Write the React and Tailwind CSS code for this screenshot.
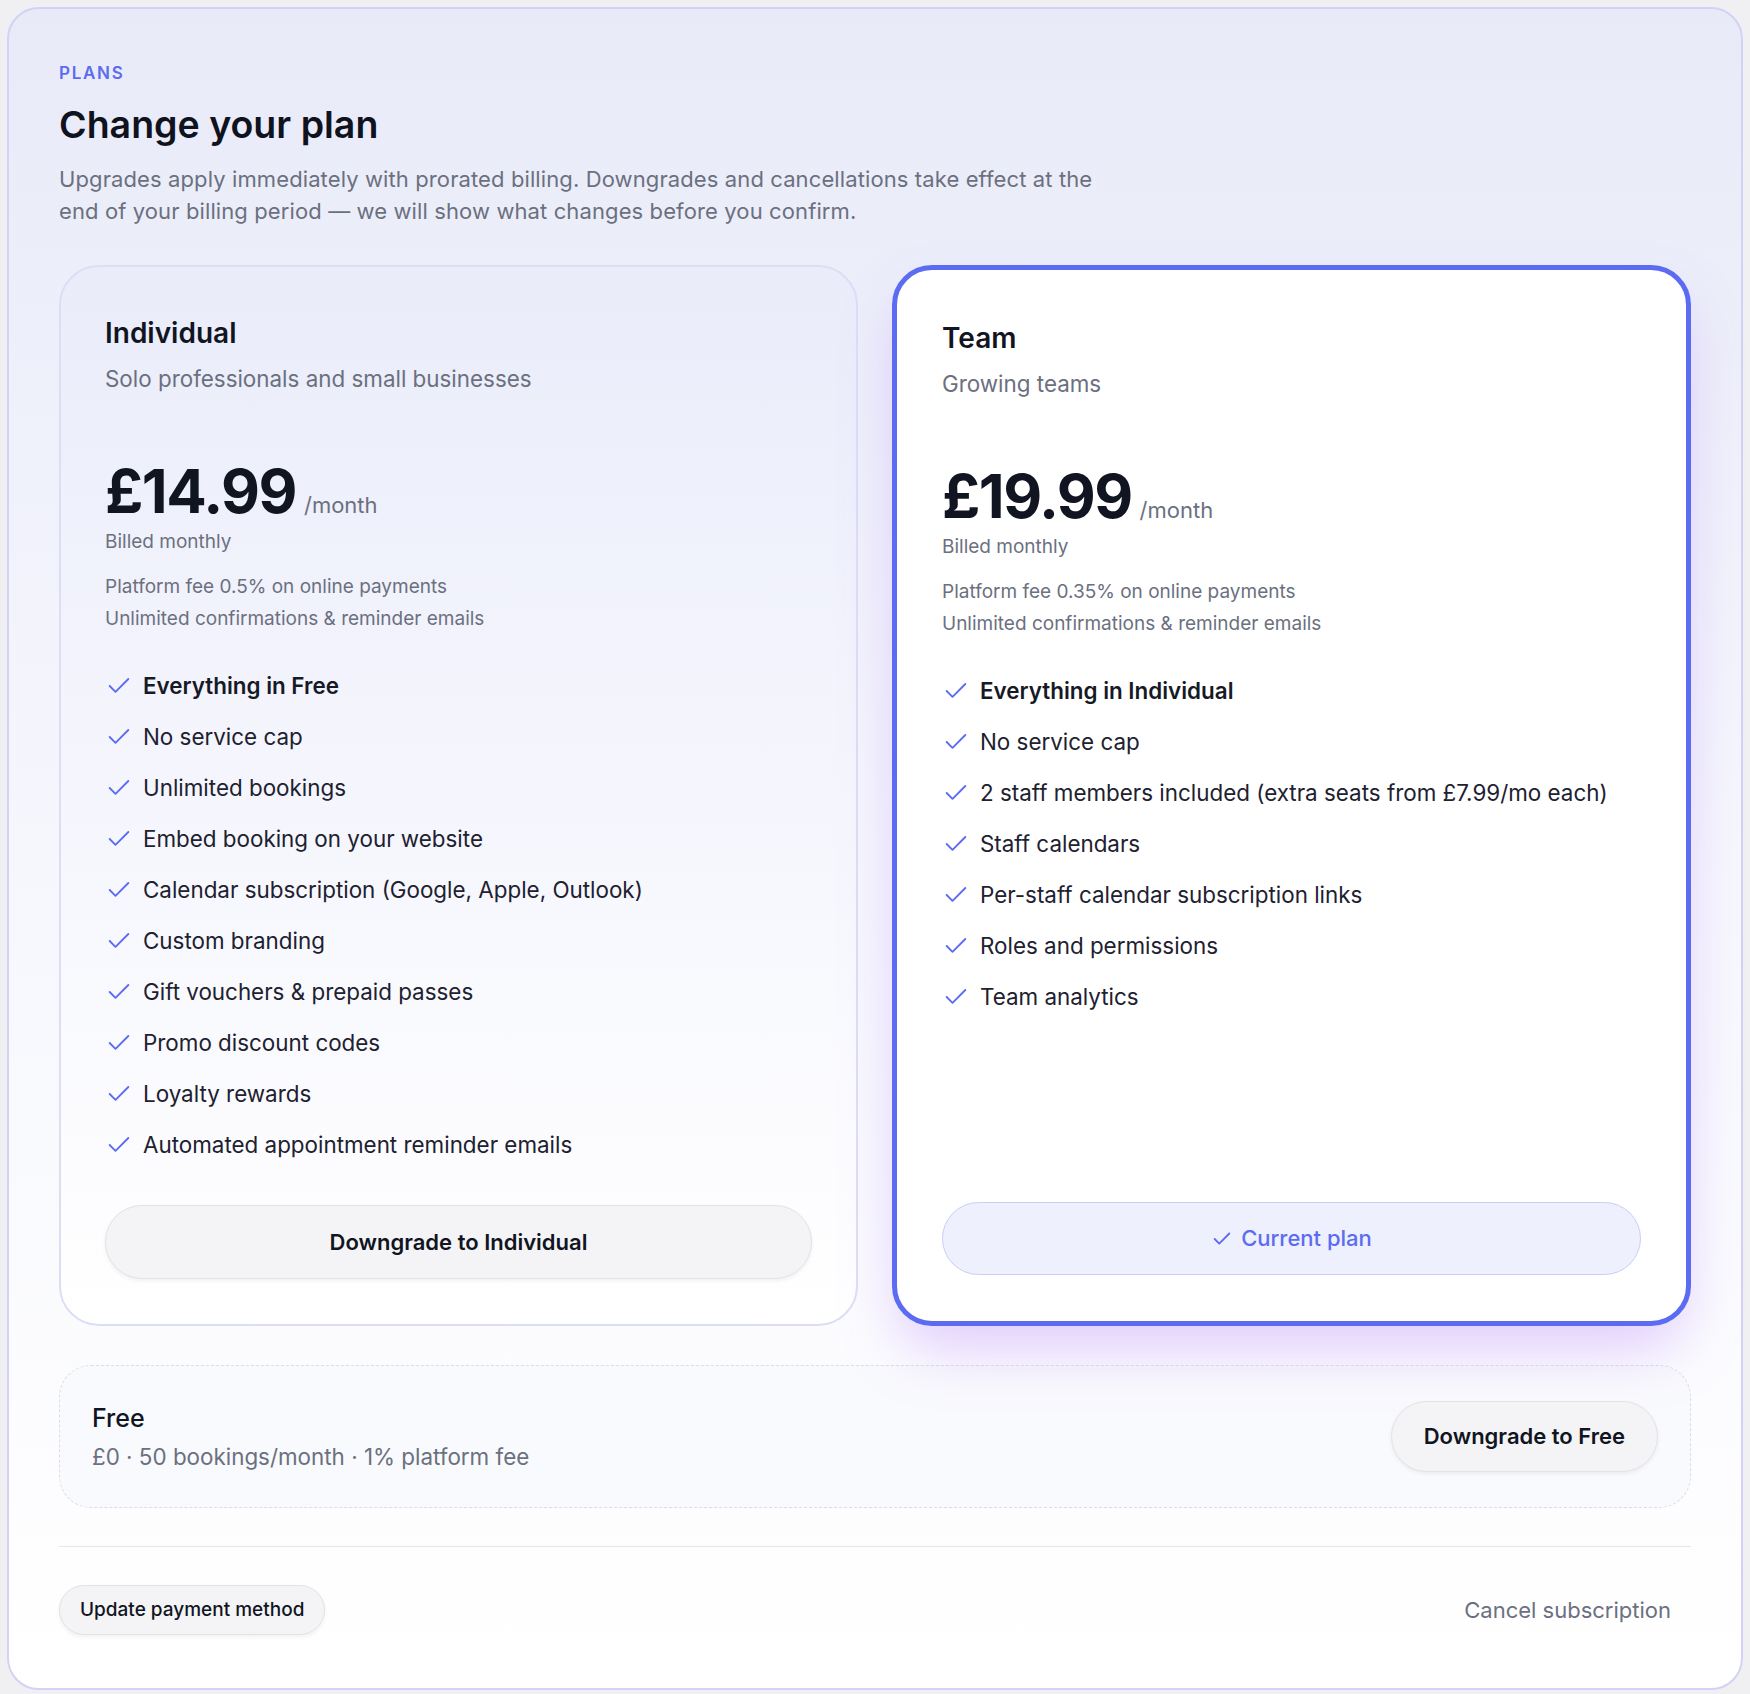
import { Check } from 'lucide-react';

const individualFeatures = [
  'No service cap',
  'Unlimited bookings',
  'Embed booking on your website',
  'Calendar subscription (Google, Apple, Outlook)',
  'Custom branding',
  'Gift vouchers & prepaid passes',
  'Promo discount codes',
  'Loyalty rewards',
  'Automated appointment reminder emails',
];

const teamFeatures = [
  'No service cap',
  '2 staff members included (extra seats from £7.99/mo each)',
  'Staff calendars',
  'Per-staff calendar subscription links',
  'Roles and permissions',
  'Team analytics',
];

function FeatureList({ lead, items }) {
  return (
    <ul className="mt-[37px] flex flex-col gap-[23px]">
      <li className="flex items-center gap-[10px] text-[22.4px] leading-7 font-semibold text-[#161a26]">
        <Check size={28} strokeWidth={1.6} className="shrink-0 text-[#5b6cf0]" />
        {lead}
      </li>
      {items.map((item) => (
        <li key={item} className="flex items-center gap-[10px] text-[22.4px] leading-7 text-[#1d2130]">
          <Check size={28} strokeWidth={1.6} className="shrink-0 text-[#5b6cf0]" />
          {item}
        </li>
      ))}
    </ul>
  );
}

function PlanHeader({ name, tagline, price, fee }) {
  return (
    <>
      <h3 className="text-[28px] leading-9 font-semibold text-[#111522]">{name}</h3>
      <p className="mt-[14px] text-[22.4px] leading-7 text-[#6b7080]">{tagline}</p>
      <div className="mt-[68px] flex items-baseline gap-2">
        <span className="text-6xl leading-none font-bold tracking-tight text-[#111522]">{price}</span>
        <span className="text-[22px] text-[#6b7080]">/month</span>
      </div>
      <p className="mt-[6px] text-[19px] leading-7 text-[#6b7080]">Billed monthly</p>
      <div className="mt-[15px] text-[19px] leading-8 text-[#6b7080]">
        <p>{fee}</p>
        <p>Unlimited confirmations &amp; reminder emails</p>
      </div>
    </>
  );
}

export default function App() {
  return (
    <div className="min-h-screen bg-[#f0f0f3] p-[7px] font-['Inter','Noto_Sans',sans-serif]">
      <div className="rounded-[32px] border-2 border-[#d2d2f6] bg-gradient-to-b from-[#e8eaf8] via-[#f6f7fd] to-white px-[50px] pt-[52px] pb-[53px]">
        {/* heading */}
        <p className="text-[17px] leading-6 font-semibold tracking-[0.1em] text-[#5b6cf0]">PLANS</p>
        <h1 className="mt-5 text-[37.5px] leading-10 font-semibold text-[#0f1320]">Change your plan</h1>
        <p className="mt-[18px] max-w-[1050px] text-[22px] leading-8 tracking-[0.005em] text-[#6b7080]">
          Upgrades apply immediately with prorated billing. Downgrades and cancellations take effect at the end of your
          billing period — we will show what changes before you confirm.
        </p>

        {/* plan cards */}
        <div className="mt-[38px] grid grid-cols-2 gap-[34px]">
          <div className="flex flex-col rounded-[40px] border-2 border-[#dcdef6] bg-gradient-to-b from-[#eaecfa] via-[#f5f6fd] to-white px-11 pt-12 pb-[45px]">
            <PlanHeader
              name="Individual"
              tagline="Solo professionals and small businesses"
              price="£14.99"
              fee="Platform fee 0.5% on online payments"
            />
            <FeatureList lead="Everything in Free" items={individualFeatures} />
            <button
              type="button"
              className="mt-[46px] h-[74px] rounded-full border border-[#e2e2e8] bg-[#f4f4f6] text-[22px] font-semibold text-[#111522] shadow-[0_2px_4px_rgba(0,0,0,0.06)]"
            >
              Downgrade to Individual
            </button>
          </div>

          <div className="flex flex-col rounded-[40px] border-[5px] border-[#5b6cf2] bg-white px-[45px] pt-[50px] pb-[46px] shadow-[0_30px_60px_-10px_rgba(168,110,250,0.35)]">
            <PlanHeader
              name="Team"
              tagline="Growing teams"
              price="£19.99"
              fee="Platform fee 0.35% on online payments"
            />
            <FeatureList lead="Everything in Individual" items={teamFeatures} />
            <button
              type="button"
              className="mt-auto flex h-[73px] items-center justify-center gap-2 rounded-full border border-[#c9cef6] bg-[#eef0fd] text-[22px] font-medium text-[#5b6cf0]"
            >
              <Check size={22} strokeWidth={2} />
              Current plan
            </button>
          </div>
        </div>

        {/* free tier */}
        <div className="mt-[39px] flex h-[143px] items-center justify-between rounded-[32px] border border-dashed border-[#dcdde4] bg-[#f8f9fc]/80 px-8">
          <div>
            <p className="text-[25px] leading-8 font-medium text-[#111522]">Free</p>
            <p className="mt-[9px] text-[22.4px] leading-7 text-[#6b7080]">£0 · 50 bookings/month · 1% platform fee</p>
          </div>
          <button
            type="button"
            className="h-[71px] rounded-full border border-[#e2e2e8] bg-[#f4f4f6] px-8 text-[22px] font-semibold text-[#111522] shadow-[0_2px_4px_rgba(0,0,0,0.06)]"
          >
            Downgrade to Free
          </button>
        </div>

        <div className="mt-[38px] h-px bg-[#e5e6ea]" />

        {/* footer actions */}
        <div className="mt-[38px] flex items-center justify-between">
          <button
            type="button"
            className="h-[50px] rounded-full border border-[#e2e2e8] bg-[#f4f4f6] px-5 text-[19px] font-medium text-[#111522] shadow-[0_2px_4px_rgba(0,0,0,0.06)]"
          >
            Update payment method
          </button>
          <button type="button" className="px-5 text-[22px] text-[#6b7080]">
            Cancel subscription
          </button>
        </div>
      </div>
    </div>
  );
}
